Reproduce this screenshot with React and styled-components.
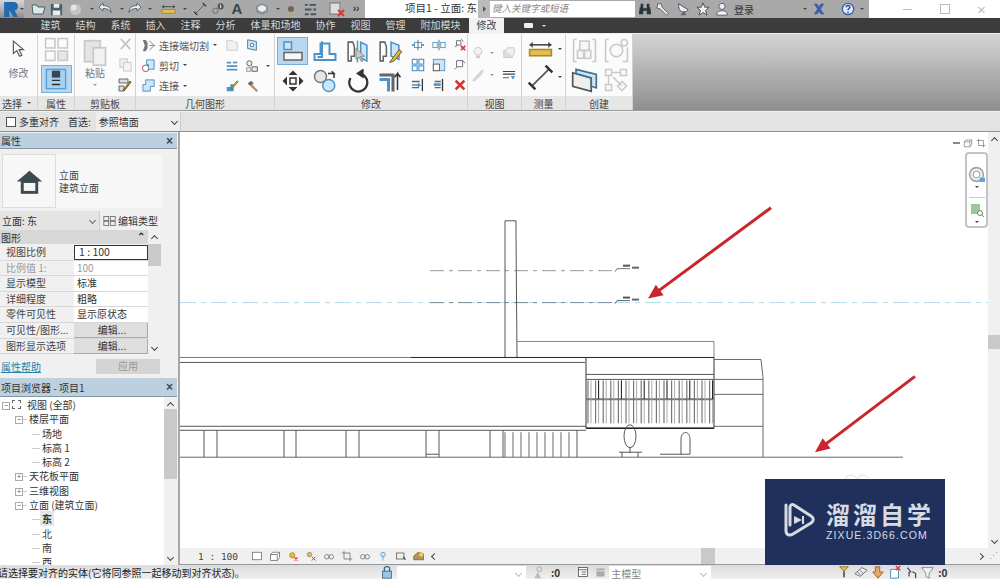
import React from 'react';
import styled, { createGlobalStyle } from 'styled-components';

const Global = createGlobalStyle`
  html, body { margin: 0; padding: 0; background: #fff; overflow: hidden; }
  body { font-family: "Noto Sans CJK SC", "Noto Sans", sans-serif; font-size: 10px; color: #333; }
`;

const B = '#4b93c9';
const BL = '#cfe4f4';
const G = '#555';
const LG = '#c9c9c9';

// all drawn on a 16x16 grid, scaled by the size prop
const icons = {
  open: <path d="M1 4h5l1 2h7l-2 7H2z" fill="#dfe6ea" stroke="#48606e" />,
  save: <><path d="M2 2h11l1 1v11H2z" fill="#4b5d68" /><path d="M5 2h6v4H5zM4 9h8v5H4z" fill="#e8edf0" /></>,
  sync: <><circle cx="8" cy="8" r="6" fill="#c4c4c4" /><circle cx="6" cy="6" r="3" fill="#e6e6e6" /></>,
  undo: <path d="M2 6l4-4v2.500c5 0 8 2 8 7-1.500-3-4-4-8-4V10z" fill="#e8eef2" stroke="#56646c" />,
  redo: <path d="M14 6l-4-4v2.500c-5 0-8 2-8 7 1.500-3 4-4 8-4V10z" fill="#e8eef2" stroke="#56646c" />,
  measure: <><path d="M1 5h14" stroke="#444" /><path d="M1 5l2-2v4zM15 5l-2-2v4z" fill="#444" /><rect x="1" y="8" width="14" height="4" fill="#e5bf4e" stroke="#a88a2c" /></>,
  dim: <><path d="M3 13L13 3" stroke="#555" /><path d="M1 11l4 4M11 1l4 4" stroke="#333" strokeWidth="1.500" /></>,
  tag: <><circle cx="5" cy="10" r="3" fill="none" stroke="#666" /><circle cx="11" cy="5" r="3.500" fill="#555" /><path d="M11 3v4" stroke="#fff" /></>,
  house3d: <><path d="M8 2l6 3v6l-6 3-6-3V5z" fill="#8a9298" /><path d="M4 6l4-2 4 2v3l-4 2-4-2z" fill="#eee" /></>,
  section: <><circle cx="8" cy="8" r="3.500" fill="#666" /><path d="M8 1v4M8 11v4" stroke="#d8a03a" strokeWidth="1.500" /></>,
  lines: <path d="M2 3h3M7 3h7M2 8h7M11 8h3M2 13h4M8 13h6" stroke="#456" strokeWidth="2" />,
  closeV: <><rect x="1" y="2" width="10" height="11" fill="#ddd" stroke="#777" /><path d="M9 9l6 6M15 9l-6 6" stroke="#d33" strokeWidth="2" /></>,
  cursor: <path d="M3 1l0 11 3-2.500 2.500 5 2-1-2.500-5h4z" fill="#fff" stroke="#555" />,
  walls: <g fill="none" stroke={LG}><rect x="1" y="1" width="6" height="6" /><rect x="9" y="1" width="6" height="6" /><rect x="1" y="9" width="6" height="6" /><rect x="9" y="9" width="6" height="6" fill="#e6e6e6" /></g>,
  props: <><rect x="1" y="1" width="14" height="14" fill="#a9d0ee" stroke="#5a9bd0" /><rect x="5" y="2" width="6" height="5" fill="#345" /><path d="M5 9h6M5 12h6" stroke="#233" /></>,
  paste: <><rect x="2" y="1" width="9" height="12" fill="#e4e4e4" stroke={LG} /><rect x="7" y="5" width="7" height="10" fill="#f1f1f1" stroke={LG} /></>,
  cut: <path d="M3 2l10 11M13 2L3 13" stroke="#c6c6c6" strokeWidth="2" />,
  copy: <><rect x="2" y="2" width="8" height="9" fill="#eee" stroke={LG} /><rect x="6" y="6" width="8" height="9" fill="#f5f5f5" stroke={LG} /></>,
  match: <><path d="M2 2h9v4H2zM2 9h5v5H2z" fill="#ddd" stroke="#667" /><path d="M14 5l-6 8-2 1 1-2 6-8z" fill="#c9a24a" stroke="#6b5720" /></>,
  wallCut: <><path d="M2 2h3l2 3v6l-2 3H2l2-6z" fill="#777" /><path d="M9 3l5 5-5 5M9 8h6" stroke="#888" fill="none" /></>,
  shapeCut: <><circle cx="5" cy="11" r="3.500" fill="#fff" stroke="#c33" /><path d="M6 2h8v10H8V7H6z" fill={BL} stroke={B} /></>,
  shapeJoin: <path d="M5 2h9v7h-4v5H2V7h3z" fill={BL} stroke={B} />,
  folder: <path d="M2 3h7l2 2h3v9H2z" fill="#f0f0f0" stroke={LG} />,
  cubeB: <><path d="M3 2l10 2v10L3 12z" fill={BL} stroke="#3f6f93" /><circle cx="8" cy="8" r="2" fill="#fff" stroke="#3f6f93" /></>,
  sliders: <><path d="M2 4h5M2 8h12M2 12h12" stroke={B} strokeWidth="2" /><path d="M9 4h5" stroke="#888" strokeWidth="2" /></>,
  gears: <><circle cx="5" cy="5" r="3" fill="#eee" stroke="#555" /><rect x="8" y="9" width="6" height="5" fill="#eee" stroke="#555" /><rect x="2" y="10" width="4" height="4" fill="none" stroke="#888" /></>,
  stairs: <><path d="M2 14V9h4V6h4V3v11z" fill={B} /><path d="M14 2l-6 7-1 2 2-1 6-7z" fill="#e9b949" stroke="#8a6a1d" /></>,
  hammer: <><path d="M3 5l4-3 3 3-4 3z" fill="#6a6a6a" /><path d="M7 7l7 7" stroke="#b98a5a" strokeWidth="2.500" /></>,
  align: <><rect x="2" y="2" width="5" height="5" fill={BL} stroke={B} /><rect x="2" y="9" width="12" height="5" fill="#f4f8fb" stroke="#666" /></>,
  offset: <path d="M1 14h14v-4h-4V3H5v7H1z M3 12h3V1.500" fill="none" stroke={B} strokeWidth="1.300" />,
  mirrorPick: <><path d="M2 2h3l1 3v6H4v3H2z" fill="#fff" stroke="#666" /><path d="M10 2l4 2v10l-4-2z" fill={BL} stroke={B} /><path d="M8 1v14" stroke="#4a9" /><path d="M7 6v7l2-1.500 1.500 3 1-.5-1.500-3h2.500z" fill="#ccc" stroke="#777" strokeWidth=".5" /></>,
  mirrorDraw: <><path d="M2 2h3l1 3v6H4v3H2z" fill="#fff" stroke="#666" /><path d="M9 2l5 2v9l-5-2z" fill={BL} stroke={B} /><path d="M14 7l-6 8 3-1 5-6z" fill="#eab93f" stroke="#6d5417" strokeWidth=".6" /></>,
  move: <><path d="M8 1l3 3H5zM8 15l3-3H5zM1 8l3-3v6zM15 8l-3-3v6z" fill="#333" /><rect x="6" y="6" width="4" height="4" fill="#fff" stroke="#333" /></>,
  copyM: <><circle cx="5" cy="5" r="4" fill="#e6e6e6" stroke="#777" /><circle cx="10.500" cy="11" r="4" fill={BL} stroke={B} /><path d="M10 3h4l-1.500-1.500M14 3v3" fill="none" stroke="#333" /></>,
  rotate: <path d="M8 3a6 6 0 1 1-5 3M8 3l3-2v4z" fill="none" stroke="#333" strokeWidth="1.500" />,
  trim: <><path d="M1 4h9v11" fill="none" stroke="#666" strokeWidth="2" /><path d="M1 7h6v8" fill="none" stroke={B} strokeWidth="2" /><path d="M13 14V3l-2 2.500M13 3l2 2.500" fill="none" stroke="#333" /></>,
  split: <><path d="M1 8h14" stroke={B} strokeWidth="2" /><rect x="4" y="5" width="8" height="6" fill="#fff" stroke={B} /><path d="M8 2v12" stroke={G} /></>,
  split2: <><rect x="1" y="5" width="5" height="6" fill="#fff" stroke={B} /><rect x="10" y="5" width="5" height="6" fill="#fff" stroke={B} /><path d="M8 2v12" stroke={G} /></>,
  pinX: <><path d="M4 3h5v5H4zM2 10l4-2M9 1l3 3" fill="none" stroke="#667" /><path d="M9 9l5 5M14 9l-5 5" stroke="#d23c32" strokeWidth="2" /></>,
  array: <g fill="#fff" stroke={B} strokeWidth="1.300"><rect x="1.500" y="1.500" width="5.500" height="5.500" /><rect x="9" y="1.500" width="5.500" height="5.500" /><rect x="1.500" y="9" width="5.500" height="5.500" /><rect x="9" y="9" width="5.500" height="5.500" /></g>,
  scale: <><rect x="1.500" y="1.500" width="13" height="13" fill={BL} stroke={B} /><rect x="1.500" y="7" width="7" height="7.500" fill="#fff" stroke="#555" /></>,
  pin: <path d="M4 3h7v7H4zM2 13l3-3M10 2l4 4" fill="none" stroke="#667" />,
  trimL: <><path d="M1 4h9M1 11h8" stroke="#666" strokeWidth="1.500" /><path d="M1 8h9l-2-2M10 8l-2 2" stroke={B} fill="none" strokeWidth="1.500" /><path d="M13 1v14" stroke="#333" strokeWidth="1.500" /></>,
  extend: <><path d="M3 4h7M3 11h7" stroke="#666" strokeWidth="1.500" /><rect x="2" y="6" width="8" height="3" fill={B} /><path d="M12 1v14" stroke="#333" strokeWidth="1.500" /></>,
  del: <path d="M3 3l10 10M13 3L3 13" stroke="#d5392e" strokeWidth="3.200" />,
  bulb: <><circle cx="8" cy="6" r="4.500" fill="#f2f2f2" stroke={LG} /><path d="M6 11h4v3H6z" fill={LG} /></>,
  camG: <><rect x="2" y="5" width="10" height="8" fill="#ddd" stroke={LG} /><path d="M4 5l2-3h8v7l-2 3" fill="#eee" stroke={LG} /></>,
  knife: <path d="M2 14l8-9 4-3-2 5-8 8z" fill="#d8d8d8" stroke={LG} />,
  under: <><path d="M1 4h14M1 7h14" stroke="#444" strokeWidth="1.300" /><path d="M1 11h7" stroke={B} strokeWidth="1.500" /><path d="M10 9h5l-2.500 4z" fill={B} /></>,
  boxA: <g fill="#f6f6f6" stroke={LG}><path d="M1 1H3M1 1v14h2M15 1h-2M15 1v14h-2" fill="none" /><rect x="5" y="2" width="6" height="6" /><rect x="3.500" y="8" width="4" height="5" /><rect x="8" y="8" width="4" height="5" /></g>,
  boxB: <g fill="none" stroke={LG}><path d="M1 1h2M1 1v14h2M12 15h3v-9" /><circle cx="8" cy="8" r="4" /><circle cx="13" cy="3" r="2" /></g>,
  folderB: <><path d="M1 4l11 3v8L1 12z" fill="#eee" stroke="#555" /><path d="M3 2l12 3v8l-3-1V7L3 4.500z" fill={BL} stroke="#3f6f93" /></>,
  flow: <g fill="none" stroke={LG}><rect x="1" y="1" width="4" height="4" /><rect x="11" y="1" width="4" height="4" /><rect x="1" y="11" width="4" height="4" /><path d="M5 3h6M3 5v6M6 6l6 6" /><path d="M12 9l3 3-3 3-3-3z" /></g>,
  binoc: <path d="M2 6h4v8H1zM10 6h4l1 8h-5zM3 2h3v4H3zM10 2h3v4h-3zM6 7h4v3H6z" fill="#26343c" />,
  wrench: <path d="M2 2l4 0 1 4 7 7-2 2-7-7-4-1z" fill="#eee" stroke="#556" />,
  dish: <><path d="M3 2l11 7c-2 3-8 3-10 0-1-2-1-5-1-7z" fill="#eee" stroke="#445" /><path d="M5 15h7l-3-5z" fill="#667" /></>,
  star: <path d="M8 1l2 5h5l-4 3.500 1.500 5.500L8 12l-4.500 3L5 9.500 1 6h5z" fill="#f0f0f0" stroke="#445" />,
  user: <><circle cx="8" cy="5" r="3.500" fill="#eef" stroke="#556" /><path d="M2 15c0-4 3-5 6-5s6 1 6 5z" fill="#f4f4f4" stroke="#556" /></>,
  xLogo: <path d="M2 2h4l2 3 2-3h4l-4 6 4 6h-4l-2-3-2 3H2l4-6z" fill="#3f5ea8" />,
  help: <><circle cx="8" cy="8" r="6.500" fill="#dfe8f6" stroke="#3f5ea8" strokeWidth="1.500" /><path d="M6 6c0-3 4.500-2.500 4 0 0 1.500-2 1.500-2 3.500M8 11v2" fill="none" stroke="#2d4a93" strokeWidth="1.600" /></>,
  rLogo: <path d="M2 1h8c4 0 5 2 5 4s-1 3.500-3 4l3 6h-4l-4-6v6H2z" fill="#1f6cb5" />,
  home: <><path d="M8 2l7 6H1z" fill="#3e4a52" /><rect x="4" y="8" width="8" height="6" fill="#f6f6f6" stroke="#3e4a52" strokeWidth="1.600" /></>,
  typeBox: <g fill="none" stroke="#666"><rect x="1" y="3" width="6" height="5" /><rect x="9" y="3" width="6" height="5" /><rect x="1" y="9" width="6" height="5" /><rect x="9" y="9" width="6" height="5" /></g>,
  frame: <rect x="2" y="3" width="12" height="10" fill="#fff" stroke="#666" />,
  cube: <path d="M2 6h9v8H2zM2 6l3-3h9v7l-3 4M11 6l3-3" fill="#fff" stroke="#666" />,
  sun: <><circle cx="7" cy="7" r="3.500" fill="#eab93f" stroke="#a57e1e" /><path d="M10 10l4 4M14 10l-4 4" stroke="#d33" strokeWidth="1.500" /></>,
  shadow: <><circle cx="6" cy="6" r="3" fill="#eab93f" stroke="#888" /><path d="M9 9l5 5M14 9l-5 5" stroke="#d33" strokeWidth="1.300" /></>,
  glasses: <g fill="none" stroke="#667"><circle cx="5" cy="9" r="3" /><circle cx="11" cy="9" r="3" /></g>,
  crop: <path d="M4 1v11h11M1 4h11v11" fill="none" stroke="#667" />,
  dot: <><circle cx="8" cy="6" r="3" fill={BL} stroke={B} /><path d="M8 9v5" stroke={B} /></>,
  cam: <><rect x="2" y="4" width="10" height="8" fill="#eee" stroke="#555" /><path d="M11 9l3 4" stroke="#333" strokeWidth="1.500" /></>,
  house: <><path d="M1 8l6-5 7 2v8H1z" fill="#b7935c" stroke="#7a5f33" /><circle cx="11" cy="6" r="3" fill="#eacb56" /></>,
  lock: <><rect x="3" y="7" width="10" height="8" fill="#9cc7e6" stroke="#35688c" /><path d="M5 7V4c0-3 6-3 6 0v3" fill="none" stroke="#35688c" strokeWidth="1.500" /></>,
  gPerson: <><circle cx="9" cy="4" r="3" fill="#ddd" stroke="#aaa" /><path d="M7 7l-4 8h8z" fill="#bbb" /></>,
  sheet: <><rect x="2" y="2" width="12" height="12" fill="#fff" stroke="#444" /><path d="M2 5h12M6 8h6M6 11h6" stroke="#444" /></>,
  grayBox: <><rect x="3" y="3" width="10" height="10" fill="#aaa" /><path d="M3 6h10" stroke="#eee" /></>,
  linkA: <><path d="M3 2h10l-5 5z" fill="#e5bf4e" stroke="#8a7121" /><path d="M8 7v7" stroke="#555" strokeWidth="2" /></>,
  linkB: <path d="M1 10L9 3l6 3-8 7zM4 8l4 4M7 6l4 4" fill="#eee" stroke="#667" />,
  linkC: <><path d="M5 2h5v6h4l-6 7-6-7h3z" fill="#e7a86d" stroke="#8b5a2b" /></>,
  linkD: <><path d="M3 5h9v10H3z" fill="#fff" stroke="#48a" /><path d="M9 1l5 5M14 1L9 6" stroke="#d33" strokeWidth="1.600" /></>,
  linkE: <path d="M3 2l4 5-2 1v5M9 7l4 2v6" fill="none" stroke="#445" strokeWidth="1.500" />,
  filter: <path d="M1 2h14L10 9v6l-4-2V9z" fill="#f4f4f4" stroke="#778" />,
  navWheel: <><circle cx="8" cy="8" r="6.500" fill="#eee" stroke="#9aa" strokeWidth="1.500" /><circle cx="8" cy="8" r="3" fill="#fff" stroke="#9aa" /><path d="M11 11h5v4h-5z" fill="#6a9fd0" /></>,
  navZoom: <><rect x="2" y="2" width="9" height="10" fill="#9cc79c" /><circle cx="11" cy="11" r="2.500" fill="#fff" stroke="#777" /><path d="M13 13l2 2" stroke="#777" /></>,
};

const Glyph = styled.svg`
  display: block;
  flex: none;
`;

const Icon = ({ n, s = 14 }) => (
  <Glyph width={s} height={s} viewBox="0 0 16 16">{icons[n]}</Glyph>
);

const Caret = styled.i`
  display: block;
  flex: none;
  width: 0;
  height: 0;
  margin: ${p => p.$m || '0 4px'};
  border-left: 2px solid transparent;
  border-right: 2px solid transparent;
  border-top: 2px solid ${p => p.$c || '#444'};
`;

const Chevron = styled.i`
  display: block;
  flex: none;
  width: 5px;
  height: 5px;
  box-sizing: border-box;
  border: solid ${p => p.$c || '#444'};
  border-width: 0 1.400px 1.400px 0;
  transform: rotate(${p => p.$dir || 45}deg);
`;

const Shell = styled.div`
  width: 1000px;
  height: 579px;
  display: flex;
  flex-direction: column;
  overflow: hidden;
  background: #f0f0f0;
`;

/* title bar */
const TitleBar = styled.div`
  height: 18px;
  display: flex;
  align-items: center;
  background: #a9a9a9;
  flex: none;
`;
const AppButton = styled.div`
  width: 24px;
  height: 18px;
  display: flex;
  align-items: center;
  padding-left: 2px;
  box-sizing: border-box;
  background: linear-gradient(#d8d8d8, #8c8c8c);
  flex: none;
`;
const QuickBar = styled.div`
  display: flex;
  align-items: center;
  width: 341px;
  height: 18px;
  padding-left: 6px;
  box-sizing: border-box;
  flex: none;
`;
const Quick = styled.div`
  width: ${p => p.$w}px;
  display: flex;
  justify-content: center;
  flex: none;
`;
const ProjectTitle = styled.div`
  width: 113px;
  height: 18px;
  background: #fff;
  text-align: right;
  padding-right: 1px;
  box-sizing: border-box;
  font-size: 10.500px;
  line-height: 15px;
  color: #333;
  white-space: nowrap;
  flex: none;
`;
const SearchArrow = styled.div`
  width: 12px;
  height: 18px;
  display: flex;
  align-items: center;
  justify-content: center;
  background: #bbb;
  flex: none;
  &::before {
    content: '';
    border-left: 3px solid #555;
    border-top: 3px solid transparent;
    border-bottom: 3px solid transparent;
  }
`;
const SearchBox = styled.div`
  width: 145px;
  height: 16px;
  background: #fff;
  font-size: 9.500px;
  font-style: italic;
  line-height: 15px;
  padding-left: 2px;
  box-sizing: border-box;
  color: #888;
  flex: none;
`;
const InfoBar = styled.div`
  flex: 1;
  display: flex;
  align-items: center;
  padding-left: 1px;
  height: 18px;
  min-width: 0;
`;
const Login = styled.span`
  font-size: 10px;
  margin-left: 3px;
  width: 69px;
  color: #333;
  flex: none;
`;
const WindowButtons = styled.div`
  width: 131px;
  height: 18px;
  background: #fff;
  display: flex;
  flex: none;
`;
const WinButton = styled.div`
  width: 38px;
  display: flex;
  align-items: center;
  justify-content: center;
  &:first-child { margin-left: 20px; }
`;

/* tabs */
const TabBar = styled.div`
  height: 15px;
  background: #3c3c3c;
  display: flex;
  align-items: stretch;
  padding-left: 33px;
  flex: none;
`;
const Tab = styled.div`
  padding: 0 7.500px;
  font-size: 10px;
  line-height: 14px;
  color: ${p => (p.$active ? '#444' : '#d5d5d5')};
  background: ${p => (p.$active ? '#f2f2f2' : 'transparent')};
  margin-left: ${p => (p.$active ? '1px' : 0)};
`;
const TabExtra = styled.div`
  display: flex;
  align-items: center;
  margin-left: 20px;
  &::before {
    content: '';
    width: 9px;
    height: 5px;
    background: #eee;
    border-radius: 1px;
  }
`;

/* ribbon */
const Ribbon = styled.div`
  height: 76px;
  display: flex;
  flex: none;
  margin-top: 1px;
  border-bottom: 1px solid #9a9a9a;
  background: linear-gradient(#d4d4d4, #8f8f8f);
`;
const Panel = styled.div`
  width: ${p => p.$w}px;
  display: flex;
  flex-direction: column;
  border-right: 1px solid #d2d2d2;
  box-sizing: border-box;
  background: #fbfbfb;
  flex: none;
`;
const PanelBody = styled.div`
  flex: 1;
  display: flex;
  min-height: 0;
`;
const PanelTitle = styled.div`
  height: 14px;
  background: #e6e6e6;
  font-size: 10px;
  line-height: 13px;
  text-align: center;
  color: #444;
  display: flex;
  align-items: center;
  justify-content: ${p => (p.$left ? 'flex-start' : 'center')};
  padding-left: ${p => (p.$left ? '2px' : 0)};
`;
const Stack = styled.div`
  display: flex;
  flex-direction: column;
  align-items: ${p => p.$a || 'center'};
  width: ${p => p.$w || 'auto'};
  flex: ${p => (p.$w ? 'none' : 1)};
  padding-top: ${p => p.$pt || 0}px;
  gap: ${p => p.$gap || 0}px;
`;
const BigLabel = styled.div`
  font-size: 10px;
  color: #777;
  line-height: 12px;
  margin-top: ${p => p.$mt || 0}px;
`;
const Selected = styled.div`
  background: #b9d8f0;
  border: 1px solid #79aed8;
  display: flex;
  align-items: center;
  justify-content: center;
  width: ${p => p.$w}px;
  height: ${p => p.$h}px;
  box-sizing: border-box;
`;
const ToolRow = styled.div`
  display: flex;
  align-items: center;
  height: 20.500px;
  padding-left: 5px;
  font-size: 10px;
  color: #555;
  white-space: nowrap;
`;
const ToolLabel = styled.span`
  margin-left: 3px;
  width: ${p => p.$w}px;
  flex: none;
`;
const ToolGrid = styled.div`
  display: grid;
  grid-template-columns: ${p => p.$cols};
  grid-auto-rows: ${p => p.$rows}px;
  justify-items: center;
  align-items: center;
  padding-top: ${p => p.$pt || 0}px;
  padding-left: ${p => p.$pl || 0}px;
`;
const Spacer = styled.div`
  flex: 1;
`;

/* options bar */
const OptionsBar = styled.div`
  height: 19px;
  flex: none;
  display: flex;
  align-items: center;
  background: #e3e3e4;
  border-bottom: 1px solid #8f8f8f;
  margin-top: 1px;
  padding-left: 6px;
  font-size: 10px;
  color: #333;
`;
const Check = styled.span`
  width: 10px;
  height: 10px;
  border: 1px solid #555;
  background: #fff;
  box-sizing: border-box;
  margin-right: 3px;
`;
const OptLabel = styled.span`
  margin-right: 9px;
`;
const OptSelect = styled.div`
  width: 85px;
  margin-left: -4px;
  height: 19px;
  background: #eeeeee;
  box-sizing: border-box;
  padding: 0 3px;
  display: flex;
  align-items: center;
  justify-content: space-between;
  border-right: 1px solid #ccc;
`;

/* workspace */
const Workspace = styled.div`
  flex: 1;
  min-height: 0;
  display: flex;
`;
const Side = styled.div`
  width: 177px;
  flex: none;
  display: flex;
  flex-direction: column;
  background: #f0f0f0;
  border-right: 2px solid #a8a8a8;
  padding-right: 1px;
`;
const DockHeader = styled.div`
  height: ${p => p.$h}px;
  background: #bdd0e0;
  border-bottom: 1px solid #7f97ac;
  margin-top: ${p => p.$mt || 1}px;
  display: flex;
  align-items: center;
  justify-content: space-between;
  padding: 0 4px 0 1px;
  font-size: 10px;
  flex: none;
  color: #333;
`;
const Close = styled.span`
  font-family: "Liberation Sans", sans-serif;
  font-weight: bold;
  font-size: 12px;
  color: #3a4a58;
  line-height: 1;
`;
const PreviewRow = styled.div`
  display: flex;
  align-items: stretch;
  padding: 5px 15px 0 2px;
  height: 59px;
  box-sizing: border-box;
  flex: none;
`;
const PreviewBox = styled.div`
  width: 54px;
  background: #f7f7f7;
  border: 1px solid #dcdcdc;
  display: flex;
  align-items: center;
  justify-content: center;
  box-sizing: border-box;
  flex: none;
`;
const PreviewText = styled.div`
  flex: 1;
  background: #f7f7f7;
  padding-left: 3px;
  display: flex;
  flex-direction: column;
  justify-content: center;
  line-height: 13px;
  font-size: 10px;
  color: #444;
`;
const TypeRow = styled.div`
  height: 19px;
  margin-top: 3px;
  display: flex;
  align-items: center;
  flex: none;
`;
const TypeSelect = styled.div`
  width: 100px;
  height: 19px;
  background: #e4e4e4;
  border-right: 1px solid #ccc;
  box-sizing: border-box;
  padding: 0 4px 0 2px;
  display: flex;
  align-items: center;
  justify-content: space-between;
  color: #333;
`;
const TypeEdit = styled.div`
  display: flex;
  align-items: center;
  gap: 2px;
  padding-left: 3px;
  color: #333;
  white-space: nowrap;
`;
const PropsArea = styled.div`
  display: flex;
  height: 125px;
  flex: none;
`;
const PropsTable = styled.div`
  width: 148px;
  flex: none;
`;
const SectionHead = styled.div`
  height: 14px;
  background: #d7d7d7;
  padding: 0 3px 0 1px;
  display: flex;
  justify-content: space-between;
  align-items: center;
  margin-bottom: 1px;
`;
const PropRow = styled.div`
  display: grid;
  grid-template-columns: 73px 1fr;
  height: 15.600px;
  border-bottom: 1px solid #d8d8d8;
  box-sizing: border-box;
`;
const PropLabel = styled.div`
  padding-left: 6px;
  line-height: 14px;
  white-space: nowrap;
  overflow: hidden;
  color: ${p => (p.$dim ? '#999' : '#444')};
`;
const PropValue = styled.div`
  background: #fff;
  padding-left: 3px;
  line-height: 14px;
  box-sizing: border-box;
  margin-left: 1px;
  color: ${p => (p.$dim ? '#999' : '#333')};
  ${p => p.$focus && 'border: 1px solid #333; line-height: 12px; padding-left: 4px; font-size: 10.500px;'}
  ${p => p.$btn && 'background: #dedede; text-align: center; border-right: 1px solid #aaa; border-bottom: 1px solid #aaa;'}
`;
const ScrollCol = styled.div`
  width: ${p => p.$w || 13}px;
  flex: none;
  display: flex;
  flex-direction: column;
  align-items: center;
  justify-content: space-between;
  background: #f0f0f0;
  padding: 6px 0 5px;
  position: relative;
  box-sizing: border-box;
`;
const Thumb = styled.div`
  position: absolute;
  left: 0;
  right: 0;
  top: ${p => p.$t}px;
  height: ${p => p.$h}px;
  background: #c9c9c9;
`;
const FooterRow = styled.div`
  height: 20px;
  display: flex;
  align-items: center;
  justify-content: space-between;
  padding: 2px 17px 0 1px;
  box-sizing: border-box;
  flex: none;
`;
const HelpLink = styled.span`
  color: #2a7fa8;
  text-decoration: underline;
`;
const ApplyBtn = styled.span`
  width: 64px;
  height: 15px;
  background: #d4d4d4;
  color: #999;
  text-align: center;
  line-height: 14px;
`;
const BrowserBody = styled.div`
  flex: 1;
  min-height: 0;
  display: flex;
  overflow: hidden;
  background: #fff;
`;
const Tree = styled.div`
  flex: 1;
  background: #fff;
  overflow: hidden;
  padding-top: 1px;
`;
const TreeRow = styled.div`
  height: 14.300px;
  line-height: 14px;
  position: relative;
  white-space: nowrap;
  font-size: 10px;
  color: #333;
  padding-left: ${p => [27, 29, 42][p.$level]}px;
  font-weight: ${p => (p.$active ? 700 : 400)};
  &::before {
    content: '';
    position: absolute;
    left: ${p => [4, 17, 32][p.$level]}px;
    top: 7px;
    width: ${p => [0, 10, 8][p.$level]}px;
    border-top: 1px solid #ccc;
  }
`;
const Expander = styled.span`
  position: absolute;
  z-index: 1;
  left: ${p => p.$x}px;
  top: 4px;
  width: 6px;
  height: 6px;
  border: 1px solid #aaa;
  background: #fff;
  font-size: 7px;
  line-height: 5px;
  text-align: center;
  color: #555;
  font-family: "Liberation Sans", sans-serif;
`;
const RootIcon = styled.span`
  position: absolute;
  left: 12px;
  top: 2px;
  width: 9px;
  height: 9px;
  border: 1px dashed #666;
  box-sizing: border-box;
`;
const Highlight = styled.span`
  background: #e6e6e6;
  padding: 0 2px;
  margin-left: -2px;
`;

/* view area */
const ViewArea = styled.div`
  flex: 1;
  display: flex;
  flex-direction: column;
  min-width: 0;
  position: relative;
`;
const ViewMain = styled.div`
  flex: 1;
  min-height: 0;
  display: flex;
  background: #fff;
`;
const Drawing = styled.svg`
  display: block;
  flex: 1;
  min-width: 0;
  background: #fff;
`;
const ViewTools = styled.div`
  position: absolute;
  top: 6px;
  right: 14px;
  display: flex;
  align-items: center;
  gap: 3px;
`;
const NavBar = styled.div`
  position: absolute;
  top: 20px;
  right: 12px;
  width: 23px;
  height: 76px;
  box-sizing: border-box;
  background: #fff;
  border: 2px solid #c4c4c4;
  border-radius: 4px;
  display: flex;
  flex-direction: column;
  align-items: center;
  padding-top: 12px;
`;
const NavDivider = styled.div`
  width: 16px;
  border-top: 1px solid #ccc;
  margin: 9px 0 4px;
`;
const ViewBar = styled.div`
  height: 16px;
  flex: none;
  display: flex;
  align-items: center;
  background: #f0f0f0;
  padding-left: 18px;
  border-bottom: 1px solid #999;
`;
const Scale = styled.span`
  font-family: "DejaVu Sans Mono", monospace;
  font-size: 9.500px;
  color: #444;
  width: 50px;
  flex: none;
  white-space: pre;
`;
const ViewIcon = styled.span`
  width: ${p => p.$w || 18}px;
  display: flex;
  justify-content: center;
  flex: none;
`;
const HThumb = styled.div`
  width: 14px;
  height: 16px;
  background: #c9c9c9;
  margin-left: 261px;
  flex: none;
`;
const HEnd = styled.div`
  margin-left: auto;
  display: flex;
  align-items: center;
  gap: 6px;
  padding-right: 2px;
`;
const Watermark = styled.div`
  position: absolute;
  left: 585px;
  bottom: 0;
  width: 180px;
  height: 86px;
  background: #20305c;
  display: flex;
  align-items: center;
  padding: 0 0 4px 14px;
  box-sizing: border-box;
  gap: 11px;
  color: #d7dbe4;
  z-index: 2;
`;
const MarkText = styled.div`
  display: flex;
  flex-direction: column;
  gap: 3px;
`;
const MarkTitle = styled.div`
  font-size: 24px;
  font-weight: 700;
  letter-spacing: 3px;
  line-height: 27px;
  white-space: nowrap;
`;
const MarkSub = styled.div`
  font-family: "Liberation Sans", sans-serif;
  font-size: 10.500px;
  letter-spacing: 1.100px;
  line-height: 11px;
  white-space: nowrap;
`;

/* status bar */
const StatusBar = styled.div`
  height: 14px;
  flex: none;
  display: flex;
  align-items: center;
  background: linear-gradient(#dcdcdc, #efefef);
  overflow: hidden;
  font-size: 10px;
`;
const StatusText = styled.div`
  width: 382px;
  flex: none;
  margin-left: -2px;
  white-space: nowrap;
  color: #222;
`;
const StatusInput = styled.div`
  width: ${p => p.$w}px;
  height: 14px;
  margin-top: 2px;
  background: #fff;
  margin-left: ${p => p.$ml || 0}px;
  display: flex;
  justify-content: space-between;
  align-items: center;
  padding: 0 5px 0 2px;
  box-sizing: border-box;
  color: #888;
  flex: none;
`;
const StatusCount = styled.span`
  font-weight: 700;
  color: #333;
  margin: 0 ${p => p.$mr || 0}px 0 1px;
  flex: none;
`;
const StatusEnd = styled.div`
  display: flex;
  align-items: center;
  gap: 3px;
  margin-left: 126px;
  flex: none;
`;
const MarkA = styled.span`
  font-family: "Liberation Sans", sans-serif;
  font-size: 15px;
  font-weight: 700;
  line-height: 18px;
  color: #39454c;
`;
const Dbl = styled.span`
  font-family: "Liberation Sans", sans-serif;
  font-size: 10px;
  line-height: 10px;
  font-weight: 700;
  color: #333;
`;
const MinLine = styled.span`
  display: block;
  width: ${p => (p.$dark ? 7 : 9)}px;
  height: ${p => (p.$dark ? 2 : 1)}px;
  background: ${p => (p.$dark ? '#888' : '#bbb')};
`;
const MaxBox = styled.span`
  display: block;
  width: 8px;
  height: 8px;
  border: 1px solid #bbb;
`;
const WinClose = styled.span`
  font-family: "Liberation Sans", sans-serif;
  font-size: 15px;
  line-height: 1;
  color: #bbb;
`;
const Grip = styled.span`
  font-family: "Liberation Sans", sans-serif;
  font-size: 9px;
  color: #999;
`;

const tabs = ['建筑', '结构', '系统', '插入', '注释', '分析', '体量和场地', '协作', '视图', '管理', '附加模块'];
const props = [
  ['比例值 1:', '100', 'dim'],
  ['显示模型', '标准'],
  ['详细程度', '粗略'],
  ['零件可见性', '显示原状态'],
];
const tree = [
  [1, '楼层平面', '−'],
  [2, '场地'],
  [2, '标高 1'],
  [2, '标高 2'],
  [1, '天花板平面', '+'],
  [1, '三维视图', '+'],
  [1, '立面 (建筑立面)', '−'],
];
const viewIcons = ['frame', 'cube', 'sun', 'shadow', 'glasses', 'crop', 'glasses', 'dot', 'cam', 'house'];

const Louvers = () => {
  const upper = Array.from({ length: 17 }, (_, i) => 588 + i * 7.600);
  const lower = Array.from({ length: 9 }, (_, i) => 505 + i * 8);
  return (
    <>
      {upper.map((x, i) => (
        <g key={x}>
          <path d={`M${x} 381V424`} stroke="#777" strokeWidth="1.200" />
          <path d={`M${x + 3} 381V400`} stroke={i % 3 === 1 ? '#111' : '#aaa'} strokeWidth="1" />
          <path d={`M${x + 3} 400V424`} stroke="#aaa" strokeWidth="1" />
        </g>
      ))}
      {lower.map(x => <path key={x} d={`M${x} 433V458`} stroke="#666" />)}
    </>
  );
};

const LevelHead = ({ y, color }) => (
  <g>
    <path d={`M615 ${y + 1}l2-3h13`} fill="none" stroke={color} />
    <rect x="623" y={y - 6} width="7" height="2" fill="#555" />
    <rect x="632" y={y - 4} width="7" height="2" fill="#666" />
  </g>
);

const Arrow = ({ x1, y1, x2, y2 }) => {
  const a = Math.atan2(y2 - y1, x2 - x1);
  const l = 16;
  const p = (r, d) => `${x2 - Math.cos(a + r) * d},${y2 - Math.sin(a + r) * d}`;
  return (
    <g>
      <line x1={x1} y1={y1} x2={x2 - Math.cos(a) * 8} y2={y2 - Math.sin(a) * 8} stroke="#c9252b" strokeWidth="3" />
      <polygon points={`${x2},${y2} ${p(0.42, l)} ${p(-0.42, l)}`} fill="#c9252b" />
    </g>
  );
};

export default function App() {
  return (
    <Shell>
      <Global />
      <TitleBar>
        <AppButton><Icon n="rLogo" s={17} /><Caret $m="0 0 0 1px" /></AppButton>
        <QuickBar>
          <Quick $w={17}><Icon n="open" s={16} /></Quick>
          <Quick $w={19}><Icon n="save" s={15} /></Quick>
          <Quick $w={18}><Icon n="sync" s={15} /></Quick>
          <Caret $m="0 4px 0 6px" />
          <Quick $w={14}><Icon n="undo" s={16} /></Quick>
          <Caret $m="0 4px 0 8px" />
          <Quick $w={14}><Icon n="redo" s={16} /></Quick>
          <Caret $m="0 9px 0 6px" />
          <Quick $w={14}><Icon n="measure" s={15} /></Quick>
          <Caret $m="0 5px 0 8px" />
          <Quick $w={16}><Icon n="dim" s={14} /></Quick>
          <Quick $w={20}><Icon n="tag" s={14} /></Quick>
          <Quick $w={18}><MarkA>A</MarkA></Quick>
          <Quick $w={32}><Icon n="house3d" s={16} /></Quick>
          <Caret $m="0 3px 0 -2px" />
          <Quick $w={16}><Icon n="section" s={14} /></Quick>
          <Quick $w={22}><Icon n="lines" s={15} /></Quick>
          <Quick $w={32}><Icon n="closeV" s={16} /></Quick>
          <Quick $w={6}><Dbl>››</Dbl></Quick>
        </QuickBar>
        <ProjectTitle>项目1 - 立面: 东</ProjectTitle>
        <SearchArrow />
        <SearchBox>键入关键字或短语</SearchBox>
        <InfoBar>
          <Quick $w={18}><Icon n="binoc" s={14} /></Quick>
          <Quick $w={18}><Icon n="wrench" s={14} /></Quick>
          <Quick $w={21}><Icon n="dish" s={14} /></Quick>
          <Quick $w={19}><Icon n="star" s={14} /></Quick>
          <Quick $w={19}><Icon n="user" s={14} /></Quick>
          <Login>登录</Login>
          <Caret $m="0 3px 0 0" />
          <Quick $w={18}><Icon n="xLogo" s={14} /></Quick>
          <Quick $w={40}><Icon n="help" s={14} /></Quick>
          <Caret $m="0 0 0 -8px" />
        </InfoBar>
        <WindowButtons>
          <WinButton><MinLine /></WinButton>
          <WinButton><MaxBox /></WinButton>
          <WinButton><WinClose>×</WinClose></WinButton>
        </WindowButtons>
      </TitleBar>

      <TabBar>
        {tabs.map(t => <Tab key={t}>{t}</Tab>)}
        <Tab $active>修改</Tab>
        <TabExtra><Caret $m="0 0 0 9px" $c="#ddd" /></TabExtra>
      </TabBar>

      <Ribbon>
        <Panel $w={38}>
          <PanelBody>
            <Stack $pt={6}>
              <Icon n="cursor" s={18} />
              <BigLabel $mt={9}>修改</BigLabel>
            </Stack>
          </PanelBody>
          <PanelTitle $left>选择<Caret $m="0 0 0 5px" /></PanelTitle>
        </Panel>
        <Panel $w={37}>
          <PanelBody>
            <Stack $pt={3} $gap={3}>
              <Icon n="walls" s={25} />
              <Selected $w={31} $h={28}><Icon n="props" s={22} /></Selected>
            </Stack>
          </PanelBody>
          <PanelTitle>属性</PanelTitle>
        </Panel>
        <Panel $w={61}>
          <PanelBody>
            <Stack $w="40px" $pt={5}>
              <Icon n="paste" s={28} />
              <BigLabel>粘贴</BigLabel>
              <Caret $m="5px 0 0" $c="#999" />
            </Stack>
            <Stack $w="20px" $pt={3} $gap={5}>
              <Icon n="cut" s={15} />
              <Icon n="copy" s={15} />
              <Icon n="match" s={16} />
            </Stack>
          </PanelBody>
          <PanelTitle>剪贴板</PanelTitle>
        </Panel>
        <Panel $w={139}>
          <PanelBody>
            <Stack $w="86px" $pt={1} $a="flex-start">
              <ToolRow><Icon n="wallCut" s={15} /><ToolLabel $w={50}>连接端切割</ToolLabel><Caret /></ToolRow>
              <ToolRow><Icon n="shapeCut" s={15} /><ToolLabel $w={20}>剪切</ToolLabel><Caret /></ToolRow>
              <ToolRow><Icon n="shapeJoin" s={15} /><ToolLabel $w={20}>连接</ToolLabel><Caret /></ToolRow>
            </Stack>
            <ToolGrid $cols="20px 20px 12px" $rows={20.500} $pt={1}>
              <Icon n="folder" />
              <Icon n="cubeB" />
              <span />
              <Icon n="sliders" />
              <Icon n="gears" />
              <Caret $m="0" />
              <Icon n="stairs" />
              <Icon n="hammer" />
              <span />
            </ToolGrid>
          </PanelBody>
          <PanelTitle>几何图形</PanelTitle>
        </Panel>
        <Panel $w={193}>
          <PanelBody>
            <ToolGrid $cols="33px 32px 33px 31px" $rows={30} $pt={2} $pl={1}>
              <Selected $w={31} $h={28}><Icon n="align" s={24} /></Selected>
              <Icon n="offset" s={24} />
              <Icon n="mirrorPick" s={25} />
              <Icon n="mirrorDraw" s={25} />
              <Icon n="move" s={24} />
              <Icon n="copyM" s={24} />
              <Icon n="rotate" s={24} />
              <Icon n="trim" s={24} />
            </ToolGrid>
            <ToolGrid $cols="20px 21px 22px" $rows={20} $pt={1} $pl={3}>
              <Icon n="split" />
              <Icon n="split2" />
              <Icon n="pinX" />
              <Icon n="array" />
              <Icon n="scale" />
              <Icon n="pin" />
              <Icon n="trimL" />
              <Icon n="extend" />
              <Icon n="del" />
            </ToolGrid>
          </PanelBody>
          <PanelTitle>修改</PanelTitle>
        </Panel>
        <Panel $w={54}>
          <PanelBody>
            <ToolGrid $cols="18px 10px 23px" $rows={22} $pt={8} $pl={1}>
              <Icon n="bulb" />
              <Caret $m="0" $c="#999" />
              <Icon n="camG" />
              <Icon n="knife" />
              <Caret $m="0" $c="#999" />
              <Icon n="under" />
            </ToolGrid>
          </PanelBody>
          <PanelTitle>视图</PanelTitle>
        </Panel>
        <Panel $w={44}>
          <PanelBody>
            <ToolGrid $cols="32px 8px" $rows={28} $pt={1} $pl={2}>
              <Icon n="measure" s={25} />
              <Caret $m="0" />
              <Icon n="dim" s={27} />
              <Caret $m="0" />
            </ToolGrid>
          </PanelBody>
          <PanelTitle>测量</PanelTitle>
        </Panel>
        <Panel $w={67}>
          <PanelBody>
            <ToolGrid $cols="33px 30px" $rows={29} $pt={2} $pl={2}>
              <Icon n="boxA" s={25} />
              <Icon n="boxB" s={25} />
              <Icon n="folderB" s={27} />
              <Icon n="flow" s={24} />
            </ToolGrid>
          </PanelBody>
          <PanelTitle>创建</PanelTitle>
        </Panel>
        <Spacer />
      </Ribbon>

      <OptionsBar>
        <Check />
        <OptLabel>多重对齐</OptLabel>
        <OptLabel>首选:</OptLabel>
        <OptSelect>参照墙面<Chevron /></OptSelect>
      </OptionsBar>

      <Workspace>
        <Side>
          <DockHeader $h={15}>属性<Close>×</Close></DockHeader>
          <PreviewRow>
            <PreviewBox><Icon n="home" s={29} /></PreviewBox>
            <PreviewText><span>立面</span><span>建筑立面</span></PreviewText>
          </PreviewRow>
          <TypeRow>
            <TypeSelect>立面: 东<Chevron $c="#666" /></TypeSelect>
            <TypeEdit><Icon n="typeBox" s={13} />编辑类型</TypeEdit>
          </TypeRow>
          <PropsArea>
            <PropsTable>
              <SectionHead>图形<Dbl>⌃</Dbl></SectionHead>
              <PropRow><PropLabel>视图比例</PropLabel><PropValue $focus>1 : 100</PropValue></PropRow>
              {props.map(([k, v, dim]) => (
                <PropRow key={k}><PropLabel $dim={dim}>{k}</PropLabel><PropValue $dim={dim}>{v}</PropValue></PropRow>
              ))}
              <PropRow><PropLabel>可见性/图形...</PropLabel><PropValue $btn>编辑...</PropValue></PropRow>
              <PropRow><PropLabel>图形显示选项</PropLabel><PropValue $btn>编辑...</PropValue></PropRow>
            </PropsTable>
            <ScrollCol $w={13}>
              <Chevron $dir={225} />
              <Thumb $t={14} $h={22} />
              <Chevron />
            </ScrollCol>
          </PropsArea>
          <FooterRow>
            <HelpLink>属性帮助</HelpLink>
            <ApplyBtn>应用</ApplyBtn>
          </FooterRow>
          <DockHeader $h={18} $mt={3}>项目浏览器 - 项目1<Close>×</Close></DockHeader>
          <BrowserBody>
            <Tree>
              <TreeRow $level={0}><Expander $x={2}>−</Expander><RootIcon />视图 (全部)</TreeRow>
              {tree.map(([lvl, name, exp]) => (
                <TreeRow key={name} $level={lvl}>
                  {exp && <Expander $x={15}>{exp}</Expander>}
                  {name}
                </TreeRow>
              ))}
              <TreeRow $level={2} $active><Highlight>东</Highlight></TreeRow>
              <TreeRow $level={2}>北</TreeRow>
              <TreeRow $level={2}>南</TreeRow>
              <TreeRow $level={2}>西</TreeRow>
            </Tree>
            <ScrollCol $w={13}>
              <Chevron $dir={225} />
              <Thumb $t={12} $h={70} />
              <Chevron />
            </ScrollCol>
          </BrowserBody>
        </Side>

        <ViewArea>
          <ViewMain>
            <Drawing viewBox="180 132 808 417" preserveAspectRatio="none">
              <path d="M180 303H988" stroke="#b4dce8" strokeWidth="1" strokeDasharray="16 5 5 5" />
              <path d="M430 271H615" stroke="#999" strokeDasharray="14 5 4 5" />
              <path d="M430 303H615" stroke="#7a8c96" strokeDasharray="14 5 4 5" />
              <LevelHead y={271} color="#777" />
              <LevelHead y={303} color="#567" />
              <g stroke="#555" fill="none">
                <path d="M505 358V221H516V234L517 358" />
                <path d="M517 342H714V358" stroke="#888" />
                <path d="M180 358H411" stroke="#777" />
                <path d="M411 358H714" stroke="#222" />
                <path d="M180 363H585" />
                <path d="M180 427H586M180 431H586" />
                <path d="M180 458H903" stroke="#666" />
                <path d="M204 431V458M217 431V458M284 431V458M296 431V458M346 431V458M359 431V458M426 431V458M439 431V458M426 455H439" />
                <path d="M490 431V458M503 431V458M577 431V458" />
                <path d="M586 358V429H714V358" stroke="#333" />
                <path d="M586 375H714M586 380H714" />
                <path d="M586 400H714" stroke="#777" strokeWidth="2" />
                <path d="M586 429H714" stroke="#222" strokeWidth="1.500" />
                <path d="M714 360H761L763 378V458M714 380H763M714 395H763M714 427H763" stroke="#666" />
                <ellipse cx="630" cy="437" rx="6" ry="11.500" />
                <path d="M630 448V454M619 453H642M622 453V458M638 453V458" />
                <path d="M681 455V440C681 431 690 431 690 440V455M660 455H690" />
              </g>
              <Louvers />
              <path d="M845 480a6 6 0 0 1 11-1M857 480a6 6 0 0 1 11-1" fill="none" stroke="#ddd" />
              <Arrow x1={771} y1={208} x2={648} y2={299} />
              <Arrow x1={915} y1={377} x2={815} y2={453} />
            </Drawing>
            <ScrollCol $w={12}>
              <Chevron $dir={225} />
              <Thumb $t={203} $h={14} />
              <Chevron />
            </ScrollCol>
          </ViewMain>
          <ViewTools>
            <MinLine $dark />
            <Icon n="cube" s={10} />
            <Icon n="crop" s={10} />
          </ViewTools>
          <NavBar>
            <Icon n="navWheel" s={17} />
            <Caret $m="3px 0 0" />
            <NavDivider />
            <Icon n="navZoom" s={16} />
            <Caret $m="3px 0 0" />
          </NavBar>
          <ViewBar>
            <Scale>1 : 100</Scale>
            {viewIcons.map((n, i) => (
              <ViewIcon key={i}><Icon n={n} s={12} /></ViewIcon>
            ))}
            <ViewIcon $w={12}><Chevron $dir={135} /></ViewIcon>
            <HThumb />
            <HEnd><Chevron $dir={-45} /><Grip>⋰</Grip></HEnd>
          </ViewBar>
          <Watermark>
            <Glyph width={36} height={38} viewBox="0 0 36 38">
              <path d="M7 4v26c0 4 4 5 7 3l18-11c3-2 3-5 0-7L15 4c-2-1-4 0-4 2v18" fill="none" stroke="#d7dbe4" strokeWidth="3" strokeLinecap="round" />
              <path d="M15 15l8 4-8 4z" fill="#d7dbe4" />
              <path d="M24 15v8" stroke="#d7dbe4" strokeWidth="2" />
            </Glyph>
            <MarkText>
              <MarkTitle>溜溜自学</MarkTitle>
              <MarkSub>ZIXUE.3D66.COM</MarkSub>
            </MarkText>
          </Watermark>
        </ViewArea>
      </Workspace>

      <StatusBar>
        <StatusText>请选择要对齐的实体(它将同参照一起移动到对齐状态)。</StatusText>
        <Icon n="lock" s={14} />
        <StatusInput $w={129} $ml={3}><span /><Chevron $c="#bbb" /></StatusInput>
        <Quick $w={24}><Icon n="gPerson" s={13} /></Quick>
        <StatusCount $mr={14}>:0</StatusCount>
        <Quick $w={18}><Icon n="sheet" s={12} /></Quick>
        <Quick $w={16}><Icon n="grayBox" s={13} /></Quick>
        <StatusInput $w={102} $ml={1}>主模型<Chevron $c="#bbb" /></StatusInput>
        <StatusEnd>
          <Icon n="linkA" s={14} />
          <Icon n="linkB" s={14} />
          <Icon n="linkC" s={14} />
          <Icon n="linkD" s={14} />
          <Icon n="linkE" s={13} />
          <Icon n="filter" s={13} />
          <StatusCount>:0</StatusCount>
        </StatusEnd>
      </StatusBar>
    </Shell>
  );
}
